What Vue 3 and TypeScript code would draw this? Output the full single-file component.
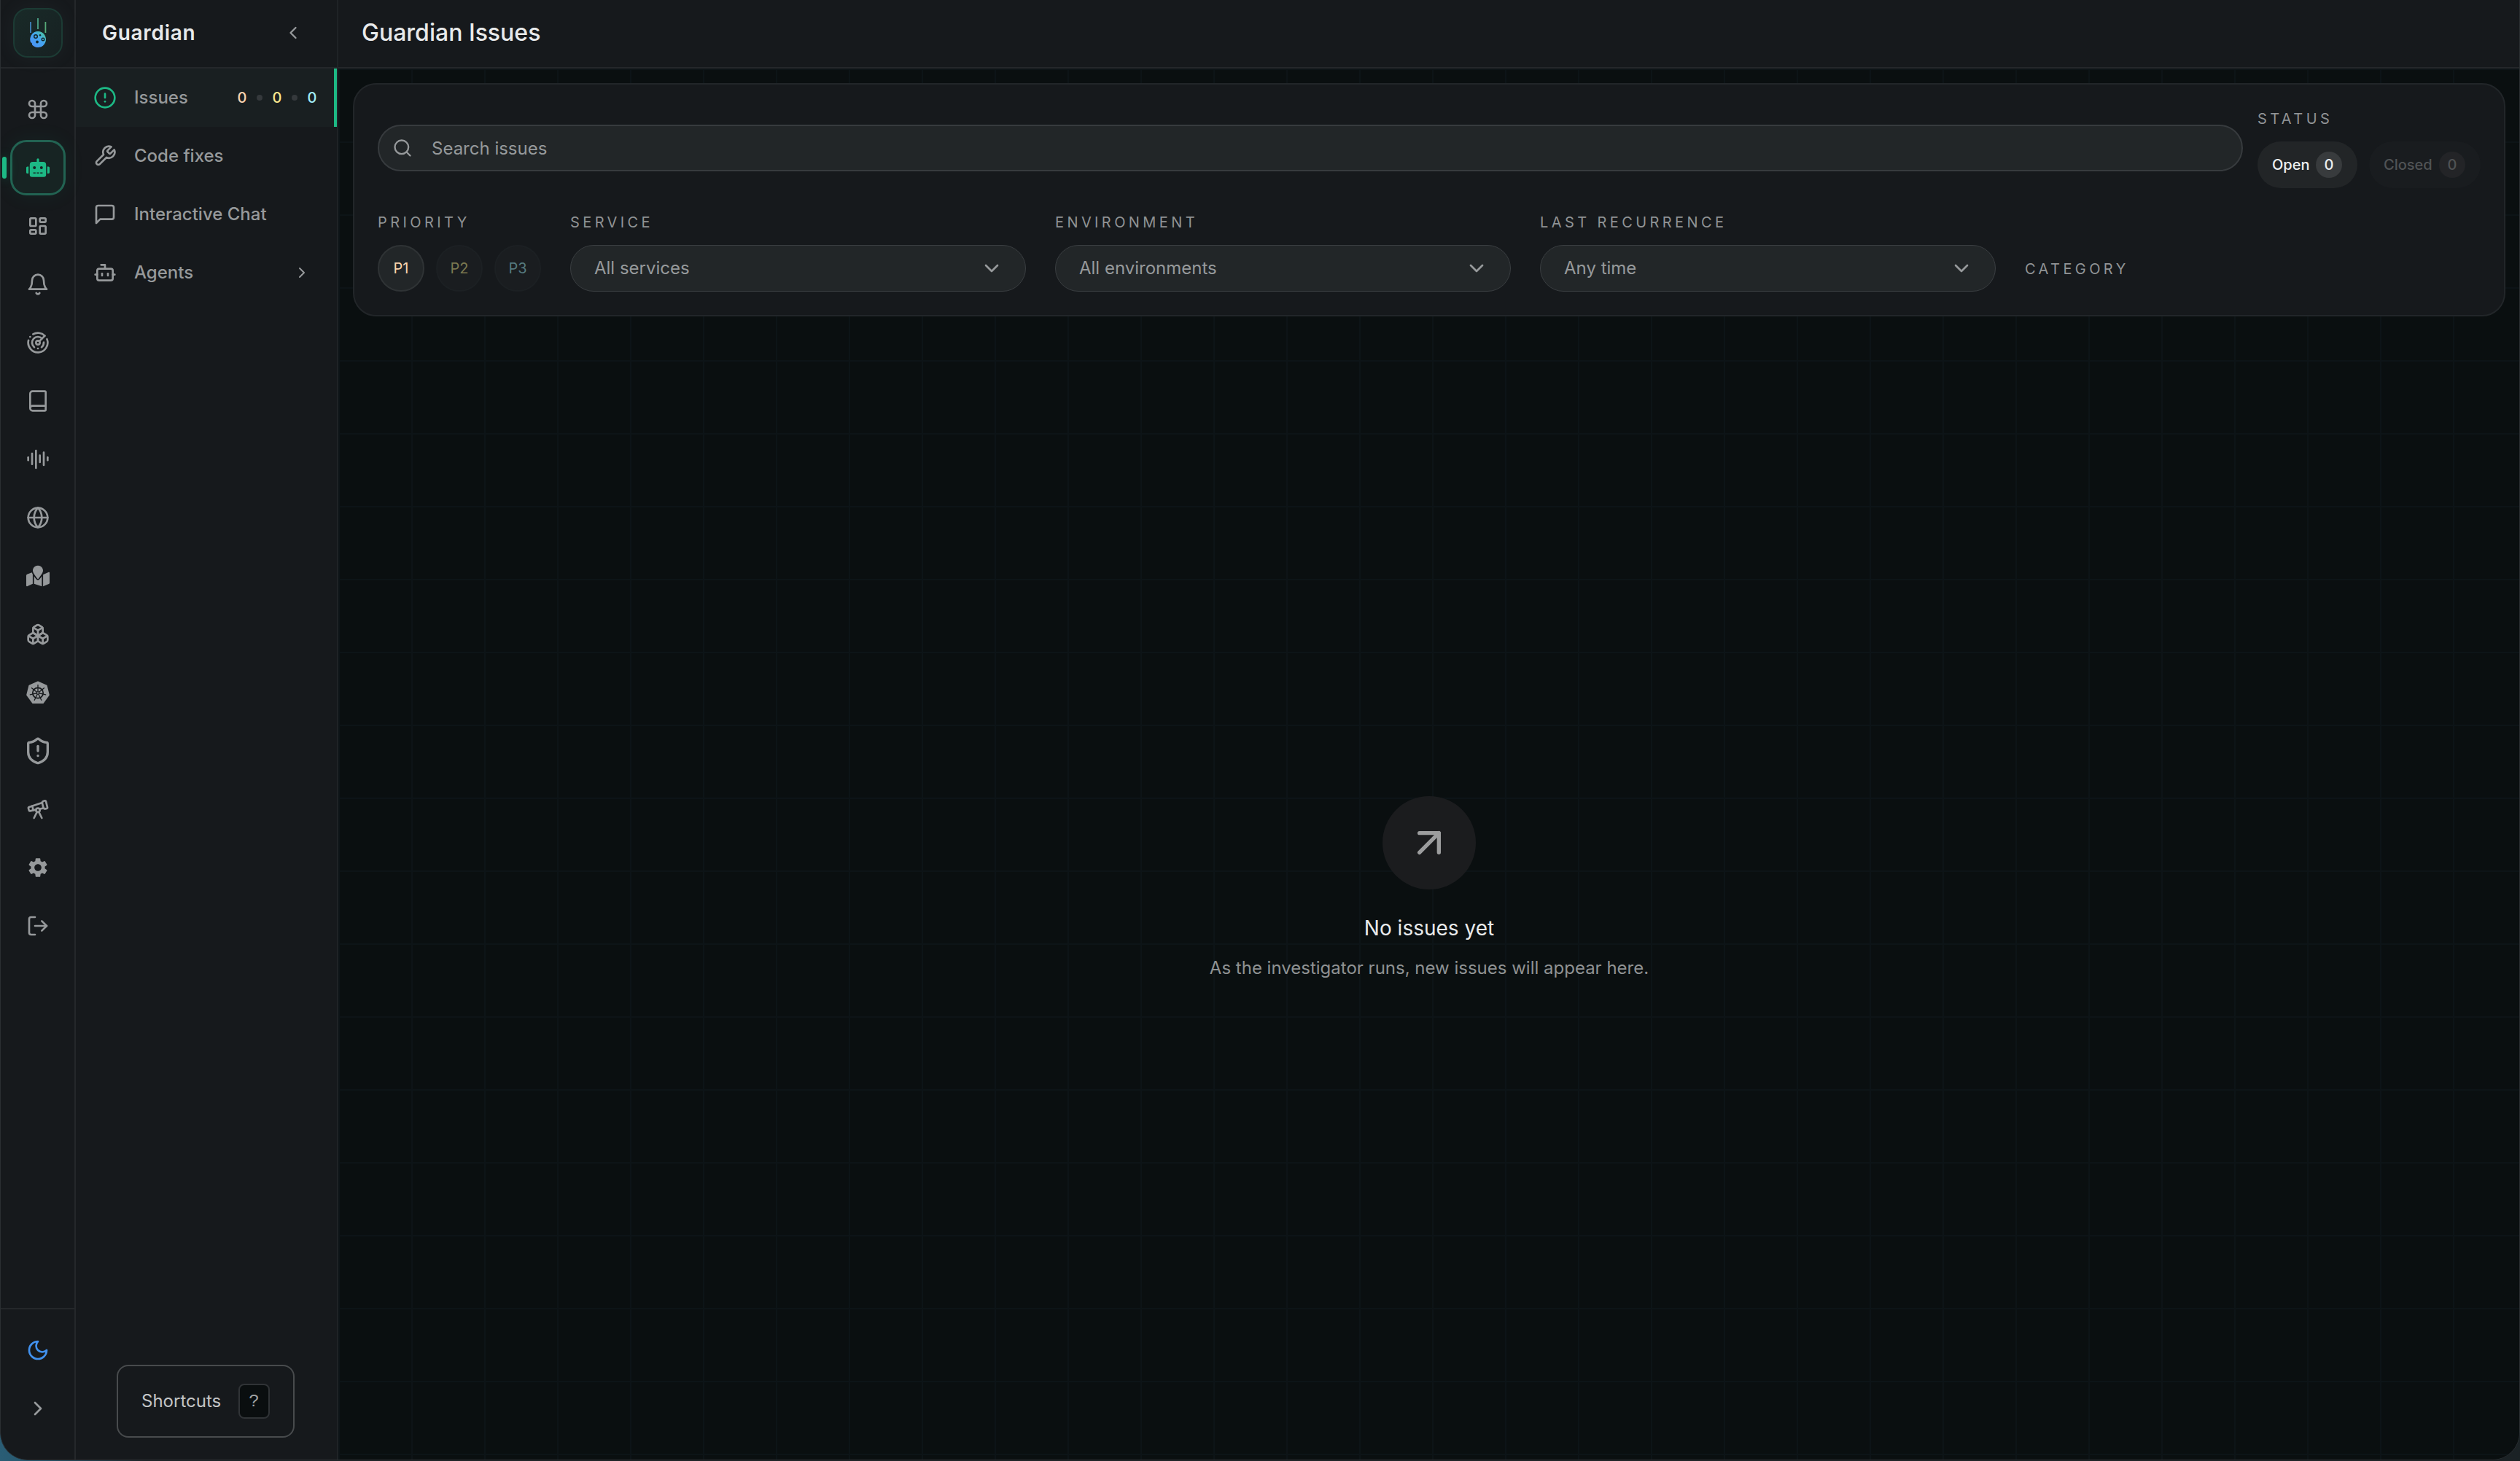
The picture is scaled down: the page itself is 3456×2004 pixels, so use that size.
<script setup lang="ts">
interface RailItem {
  name: string
  size: number
  box: string
  solid?: boolean
  active?: boolean
  paths: string[]
}

const railItems: RailItem[] = [
  { name: 'command', size: 32, box: '0 0 24 24', paths: ['M15 6v12a3 3 0 1 0 3-3H6a3 3 0 1 0 3 3V6a3 3 0 1 0-3 3h12a3 3 0 1 0-3-3'] },
  {
    name: 'guardian', size: 32, box: '0 0 640 512', solid: true, active: true,
    paths: ['M32,224H64V416H32A31.96,31.96,0,0,1,0,384V256A31.96,31.96,0,0,1,32,224Zm512-48V448a64.06,64.06,0,0,1-64,64H160a64.06,64.06,0,0,1-64-64V176a79.974,79.974,0,0,1,80-80H288V32a32,32,0,0,1,64,0V96H464A79.974,79.974,0,0,1,544,176ZM264,256a40,40,0,1,0-40,40A39.997,39.997,0,0,0,264,256Zm-8,128H192v32h64Zm96,0H288v32h64ZM456,256a40,40,0,1,0-40,40A39.997,39.997,0,0,0,456,256Zm-8,128H384v32h64ZM640,256V384a31.96,31.96,0,0,1-32,32H576V224h32A31.96,31.96,0,0,1,640,256Z'],
  },
  {
    name: 'dashboards', size: 32, box: '0 0 24 24',
    paths: [
      'M5 4h4a1 1 0 0 1 1 1v6a1 1 0 0 1-1 1H5a1 1 0 0 1-1-1V5a1 1 0 0 1 1-1',
      'M5 16h4a1 1 0 0 1 1 1v2a1 1 0 0 1-1 1H5a1 1 0 0 1-1-1v-2a1 1 0 0 1 1-1',
      'M15 12h4a1 1 0 0 1 1 1v6a1 1 0 0 1-1 1h-4a1 1 0 0 1-1-1v-6a1 1 0 0 1 1-1',
      'M15 4h4a1 1 0 0 1 1 1v2a1 1 0 0 1-1 1h-4a1 1 0 0 1-1-1V5a1 1 0 0 1 1-1',
    ],
  },
  { name: 'alerts', size: 32, box: '0 0 24 24', paths: ['M6 8a6 6 0 0 1 12 0c0 7 3 9 3 9H3s3-2 3-9', 'M10.3 21a1.94 1.94 0 0 0 3.4 0'] },
  {
    name: 'radar', size: 32, box: '0 0 24 24',
    paths: [
      'M19.07 4.93A10 10 0 0 0 6.99 3.34', 'M4 6h.01', 'M2.29 9.62A10 10 0 1 0 21.31 8.35',
      'M16.24 7.76A6 6 0 1 0 8.23 16.67', 'M12 18h.01', 'M17.99 11.66A6 6 0 0 1 15.77 16.67',
      'M10 12a2 2 0 1 0 4 0a2 2 0 1 0-4 0', 'm13.41 10.59 5.66-5.66',
    ],
  },
  { name: 'logs', size: 32, box: '0 0 24 24', paths: ['M4 19.5v-15A2.5 2.5 0 0 1 6.5 2H19a1 1 0 0 1 1 1v18a1 1 0 0 1-1 1H6.5a1 1 0 0 1 0-5H20'] },
  { name: 'traces', size: 32, box: '0 0 24 24', paths: ['M2 10v3', 'M6 6v11', 'M10 3v18', 'M14 8v7', 'M18 5v13', 'M22 10v3'] },
  { name: 'web', size: 32, box: '0 0 24 24', paths: ['M2 12a10 10 0 1 0 20 0a10 10 0 1 0-20 0', 'M12 2a14.5 14.5 0 0 0 0 20 14.5 14.5 0 0 0 0-20', 'M2 12h20'] },
  {
    name: 'map', size: 32, box: '0 0 576 512', solid: true,
    paths: ['M288 0c-69.59 0-126 56.41-126 126 0 56.26 82.35 158.8 113.9 196.02 6.39 7.54 17.82 7.54 24.2 0C331.65 284.8 414 182.26 414 126 414 56.41 357.59 0 288 0zM20.12 215.95A32.006 32.006 0 0 0 0 245.66v250.32c0 11.32 11.43 19.06 21.94 14.86L160 448V214.92c-8.84-15.98-16.07-31.54-21.25-46.42L20.12 215.95zM288 359.67c-14.07 0-27.38-6.18-36.51-16.96-19.66-23.2-40.57-49.62-59.49-76.72v182l192 64V266c-18.92 27.09-39.82 53.52-59.49 76.72-9.13 10.77-22.44 16.95-36.51 16.95zm266.06-198.51L416 224v288l139.88-55.95A31.996 31.996 0 0 0 576 426.34V176.02c0-11.32-11.43-19.06-21.94-14.86z'],
  },
  {
    name: 'services', size: 32, box: '0 0 24 24',
    paths: [
      'M2.97 12.92A2 2 0 0 0 2 14.63v3.24a2 2 0 0 0 .97 1.71l3 1.8a2 2 0 0 0 2.06 0L12 19v-5.5l-5-3-4.03 2.42Z',
      'm7 16.5-4.74-2.85', 'm7 16.5 5-3', 'M7 16.5v5.17',
      'M12 13.5V19l3.97 2.38a2 2 0 0 0 2.06 0l3-1.8a2 2 0 0 0 .97-1.71v-3.24a2 2 0 0 0-.97-1.71L17 10.5l-5 3Z',
      'm17 16.5-5-3', 'm17 16.5 4.74-2.85', 'M17 16.5v5.17',
      'M7.97 4.42A2 2 0 0 0 7 6.13v4.37l5 3 5-3V6.13a2 2 0 0 0-.97-1.71l-3-1.8a2 2 0 0 0-2.06 0l-3 1.8Z',
      'M12 8 7.26 5.15', 'm12 8 4.74-2.85', 'M12 13.5V8',
    ],
  },
  { name: 'kubernetes', size: 32, box: '0 0 32 32', solid: true, paths: [] },
  {
    name: 'security', size: 40, box: '0 0 24 24',
    paths: ['M20 13c0 5-3.5 7.5-7.66 8.95a1 1 0 0 1-.67-.01C7.5 20.5 4 18 4 13V6a1 1 0 0 1 1-1c2 0 4.5-1.2 6.24-2.72a1.17 1.17 0 0 1 1.52 0C14.51 3.81 17 5 19 5a1 1 0 0 1 1 1z', 'M12 8v4', 'M12 16h.01'],
  },
  {
    name: 'explore', size: 32, box: '0 0 24 24',
    paths: [
      'm10.065 12.493-6.18 1.318a.934.934 0 0 1-1.108-.702l-.537-2.15a1.07 1.07 0 0 1 .691-1.265l13.504-4.44',
      'm13.56 11.747 4.332-.924', 'm16 21-3.105-6.21',
      'M16.485 5.94a2 2 0 0 1 1.455-2.425l1.09-.272a1 1 0 0 1 1.212.727l1.515 6.06a1 1 0 0 1-.727 1.213l-1.09.272a2 2 0 0 1-2.425-1.455z',
      'm6.158 8.633 1.114 4.456', 'm8 21 3.105-6.21', 'M10 13a2 2 0 1 0 4 0a2 2 0 1 0-4 0',
    ],
  },
  {
    name: 'settings', size: 32, box: '0 0 24 24', solid: true,
    paths: ['M19.14 12.94c.04-.3.06-.61.06-.94 0-.32-.02-.64-.07-.94l2.03-1.58a.49.49 0 00.12-.61l-1.92-3.32a.488.488 0 00-.59-.22l-2.39.96c-.5-.38-1.03-.7-1.62-.94l-.36-2.54a.484.484 0 00-.48-.41h-3.84c-.24 0-.43.17-.47.41l-.36 2.54c-.59.24-1.13.57-1.62.94l-2.39-.96c-.22-.08-.47 0-.59.22L2.74 8.87c-.12.21-.08.47.12.61l2.03 1.58c-.05.3-.09.63-.09.94s.02.64.07.94l-2.03 1.58a.49.49 0 00-.12.61l1.92 3.32c.12.22.37.29.59.22l2.39-.96c.5.38 1.03.7 1.62.94l.36 2.54c.05.24.24.41.48.41h3.84c.24 0 .44-.17.47-.41l.36-2.54c.59-.24 1.13-.56 1.62-.94l2.39.96c.22.08.47 0 .59-.22l1.92-3.32c.12-.22.07-.47-.12-.61l-2.01-1.58zM12 15.6c-1.98 0-3.6-1.62-3.6-3.6s1.62-3.6 3.6-3.6 3.6 1.62 3.6 3.6-1.62 3.6-3.6 3.6z'],
  },
  { name: 'sign-out', size: 32, box: '0 0 24 24', paths: ['M9 21H5a2 2 0 0 1-2-2V5a2 2 0 0 1 2-2h4', 'm16 17 5-5-5-5', 'M21 12H9'] },
]

interface MenuItem {
  label: string
  active?: boolean
  expandable?: boolean
  paths: string[]
}

const menuItems: MenuItem[] = [
  { label: 'Issues', active: true, paths: ['M2 12a10 10 0 1 0 20 0a10 10 0 1 0-20 0', 'M12 8v4', 'M12 16h.01'] },
  { label: 'Code fixes', paths: ['M14.7 6.3a1 1 0 0 0 0 1.4l1.6 1.6a1 1 0 0 0 1.4 0l3.77-3.77a6 6 0 0 1-7.94 7.94l-6.91 6.91a2.12 2.12 0 0 1-3-3l6.91-6.91a6 6 0 0 1 7.94-7.94l-3.76 3.76z'] },
  { label: 'Interactive Chat', paths: ['M21 15a2 2 0 0 1-2 2H7l-4 4V5a2 2 0 0 1 2-2h14a2 2 0 0 1 2 2z'] },
  { label: 'Agents', expandable: true, paths: ['M12 8V4H8', 'M6 8h12a2 2 0 0 1 2 2v8a2 2 0 0 1-2 2H6a2 2 0 0 1-2-2v-8a2 2 0 0 1 2-2', 'M2 14h2', 'M20 14h2', 'M15 13v2', 'M9 13v2'] },
]

const spokes = Array.from({ length: 7 }, (_, i) => (i * 360) / 7)

const selects = [
  { label: 'Service', value: 'All services' },
  { label: 'Environment', value: 'All environments' },
  { label: 'Last recurrence', value: 'Any time' },
]
</script>

<template>
  <div class="desktop">
    <div class="window">
      <aside class="rail">
        <div class="rail-head">
          <div class="logo">
            <svg width="24" height="42" viewBox="0 0 24 42">
              <defs>
                <linearGradient id="moon" x1="0" y1="1" x2="1" y2="0">
                  <stop offset="0" stop-color="#4c8df6" />
                  <stop offset="0.55" stop-color="#45a5f0" />
                  <stop offset="1" stop-color="#4ccb86" />
                </linearGradient>
              </defs>
              <path d="M2 6v15" stroke="#3f83bd" stroke-width="1.8" />
              <path d="M12 1v15" stroke="#4da58a" stroke-width="1.8" />
              <path d="M22.400 6v15" stroke="#56aa78" stroke-width="1.8" />
              <path d="M12 19a11 11 0 1 1-8 18.500a3 3 0 0 0-2-3.500A11 11 0 0 1 12 19z" fill="url(#moon)" />
              <circle cx="9" cy="26" r="2.300" fill="none" stroke="#12262b" stroke-width="1.5" />
              <circle cx="19" cy="30" r="1.800" fill="none" stroke="#12262b" stroke-width="1.4" />
              <circle cx="11" cy="33.500" r="1.900" fill="#12262b" />
              <circle cx="15" cy="24.300" r="1.200" fill="#12262b" />
            </svg>
          </div>
        </div>
        <nav class="rail-nav">
          <div v-for="item in railItems" :key="item.name" class="rail-slot">
            <span v-if="item.active" class="rail-marker"></span>
            <div class="rail-button" :class="{ 'rail-active': item.active }">
              <svg v-if="item.name === 'kubernetes'" width="32" height="32" viewBox="0 0 32 32">
                <path d="M16 1.200 27.800 6.400 31 19.200 23 30.200H9L1 19.200 4.200 6.400Z" fill="currentColor" stroke="currentColor" stroke-width="1.6" stroke-linejoin="round" />
                <g class="wheel">
                  <circle cx="16" cy="16.500" r="7.200" stroke-width="1.700" />
                  <circle cx="16" cy="16.500" r="1.800" stroke-width="1.100" />
                  <path v-for="a in spokes" :key="a" d="M16 14.500V5.600" stroke-width="1.300" :transform="`rotate(${a} 16 16.5)`" />
                </g>
              </svg>
              <svg v-else :class="item.solid ? 'solid' : 'line'" :width="item.size" :height="item.size" :viewBox="item.box">
                <path v-for="d in item.paths" :key="d" :d="d" />
              </svg>
            </div>
          </div>
        </nav>
        <div class="rail-foot">
          <div class="rail-slot moon">
            <svg class="line" width="32" height="32" viewBox="0 0 24 24"><path d="M12 3a6 6 0 0 0 9 9 9 9 0 1 1-9-9Z" /></svg>
          </div>
          <div class="rail-slot">
            <svg class="line" width="32" height="32" viewBox="0 0 24 24"><path d="m9 18 6-6-6-6" /></svg>
          </div>
        </div>
      </aside>

      <aside class="panel">
        <header class="panel-head">
          <h2>Guardian</h2>
          <svg class="line" width="28" height="28" viewBox="0 0 24 24"><path d="m15 18-6-6 6-6" /></svg>
        </header>
        <nav class="menu">
          <div v-for="item in menuItems" :key="item.label" class="menu-item" :class="{ current: item.active }">
            <svg class="line menu-icon" width="32" height="32" viewBox="0 0 24 24">
              <path v-for="d in item.paths" :key="d" :d="d" />
            </svg>
            <span class="menu-label">{{ item.label }}</span>
            <span v-if="item.active" class="counts">
              <b class="c1">0</b><i></i><b class="c2">0</b><i></i><b class="c3">0</b>
            </span>
            <svg v-if="item.expandable" class="line expand" width="24" height="24" viewBox="0 0 24 24"><path d="m9 18 6-6-6-6" /></svg>
          </div>
        </nav>
        <div class="shortcuts">
          <span>Shortcuts</span>
          <kbd>?</kbd>
        </div>
      </aside>

      <main class="main">
        <header class="main-head"><h1>Guardian Issues</h1></header>
        <section class="canvas">
          <div class="filters">
            <div class="row top">
              <div class="search">
                <svg class="line" width="28" height="28" viewBox="0 0 24 24"><circle cx="11" cy="11" r="8" /><path d="m21 21-4.300-4.300" /></svg>
                <span>Search issues</span>
              </div>
              <div class="field">
                <div class="label">Status</div>
                <div class="status">
                  <div class="pill">Open <span>0</span></div>
                  <div class="pill closed">Closed <span>0</span></div>
                </div>
              </div>
            </div>
            <div class="row bottom">
              <div class="field">
                <div class="label">Priority</div>
                <div class="priorities">
                  <div class="prio p1">P1</div>
                  <div class="prio p2">P2</div>
                  <div class="prio p3">P3</div>
                </div>
              </div>
              <div v-for="s in selects" :key="s.label" class="field grow">
                <div class="label">{{ s.label }}</div>
                <div class="select">
                  <span>{{ s.value }}</span>
                  <svg class="line" width="32" height="32" viewBox="0 0 24 24"><path d="m6 9 6 6 6-6" /></svg>
                </div>
              </div>
              <div class="field grow"><div class="label">Category</div></div>
            </div>
          </div>
          <div class="empty">
            <div class="empty-icon">
              <svg class="line" width="64" height="64" viewBox="0 0 24 24"><path d="M7 7h10v10" /><path d="M7 17 17 7" /></svg>
            </div>
            <h3>No issues yet</h3>
            <p>As the investigator runs, new issues will appear here.</p>
          </div>
        </section>
      </main>
    </div>
  </div>
</template>

<style>
body {
  background: #1c2225;
}
</style>

<style scoped>
* {
  box-sizing: border-box;
}
h1, h2, h3, p {
  margin: 0;
}
svg {
  display: block;
  flex: none;
}
.desktop {
  width: 3456px;
  height: 2004px;
  overflow: hidden;
  background: linear-gradient(90deg, #2a5d75 0, #24566c 60px, #1b2225 200px);
  font-family: Inter, "Liberation Sans", sans-serif;
}
.window {
  display: flex;
  width: 3456px;
  height: 2003px;
  border: solid #2b2f32;
  border-width: 0 1px 1px;
  border-radius: 0 0 38px 38px;
  overflow: hidden;
  background: #16191c;
  color: #96999b;
}
.line {
  fill: none;
  stroke: currentColor;
  stroke-width: 2;
  stroke-linecap: round;
  stroke-linejoin: round;
}
.solid {
  fill: currentColor;
}

/* icon rail */
.rail {
  display: flex;
  flex-direction: column;
  width: 103px;
  border-right: 2px solid #24272a;
}
.rail-head {
  height: 94px;
  padding: 11px 0 0 17px;
  border-bottom: 2px solid #24272a;
}
.logo {
  display: flex;
  align-items: flex-start;
  justify-content: center;
  width: 68px;
  height: 68px;
  padding-top: 11px;
  border: 2px solid #1c3b34;
  border-radius: 20px;
  background: linear-gradient(135deg, #192a28, #172122);
  box-shadow: 0 0 28px rgba(120, 160, 150, 0.07);
}
.rail-nav {
  flex: 1;
  padding-top: 16px;
}
.rail-slot {
  position: relative;
  display: flex;
  align-items: center;
  justify-content: center;
  height: 80px;
  padding-left: 1px;
}
.rail-button {
  display: flex;
  align-items: center;
  justify-content: center;
  width: 76px;
  height: 76px;
  border-radius: 22px;
}
.rail-active {
  color: #1db985;
  border: 3px solid #226352;
  background: #172423;
  box-shadow: 0 0 30px rgba(29, 185, 133, 0.07);
}
.rail-marker {
  position: absolute;
  left: 2px;
  top: 25px;
  width: 6px;
  height: 30px;
  border-radius: 3px;
  background: #1db985;
  box-shadow: 0 0 16px rgba(29, 185, 133, 0.3);
}
.wheel {
  fill: none;
  stroke: #16191c;
  stroke-linecap: round;
}
.rail-foot {
  height: 208px;
  padding-top: 16px;
  border-top: 2px solid #24272a;
}
.moon {
  color: #4191ee;
}

/* section panel */
.panel {
  display: flex;
  flex-direction: column;
  width: 360px;
  border-right: 2px solid #1f2326;
}
.panel-head {
  display: flex;
  align-items: center;
  justify-content: space-between;
  height: 94px;
  padding: 0 46px 2px 36px;
  border-bottom: 2px solid #24272a;
}
.panel-head h2 {
  font-size: 28px;
  font-weight: 600;
  line-height: 40px;
  letter-spacing: 0.7px;
  color: #e8eaeb;
}
.menu {
  flex: 1;
}
.menu-item {
  display: flex;
  align-items: center;
  height: 80px;
  padding: 0 36px 0 24px;
}
.current {
  padding-right: 22px;
  border-right: 4px solid #1db985;
  background: #191f21;
}
.current .menu-icon {
  color: #1db985;
}
.menu-label {
  flex: 1;
  margin-left: 24px;
  padding-bottom: 2px;
  font-size: 24px;
  font-weight: 500;
}
.counts {
  display: flex;
  align-items: center;
  font-size: 20px;
}
.counts b {
  width: 16px;
  text-align: center;
  font-weight: 500;
}
.counts i {
  width: 8px;
  height: 8px;
  margin: 0 12px;
  border-radius: 4px;
  background: #35393c;
}
.c1 { color: #fad4b2; }
.c2 { color: #fbe88f; }
.c3 { color: #a2eefb; }
.shortcuts {
  display: flex;
  align-items: center;
  justify-content: space-between;
  width: 244px;
  height: 100px;
  margin: 0 0 30px 56px;
  padding: 0 32px;
  border: 2px solid #484b4d;
  border-radius: 16px;
  font-size: 24px;
  color: #c3c5c6;
}
.shortcuts span {
  padding-bottom: 2px;
}
.shortcuts kbd {
  display: flex;
  align-items: center;
  justify-content: center;
  width: 43px;
  height: 48px;
  border: 2px solid #303336;
  border-radius: 8px;
  background: #0a0e0f;
  font-family: "Liberation Mono", monospace;
  font-size: 24px;
  color: #a0a2a3;
}

/* main area */
.main {
  display: flex;
  flex-direction: column;
  flex: 1;
}
.main-head {
  height: 94px;
  padding: 25px 0 0 32px;
  border-bottom: 2px solid #24272a;
}
.main-head h1 {
  font-size: 32px;
  font-weight: 500;
  line-height: 40px;
  color: #e8eaeb;
}
.canvas {
  display: flex;
  flex-direction: column;
  flex: 1;
  padding: 20px 19px 0 20px;
  background-color: #0a0f10;
  background-image:
    linear-gradient(#0d1417 2px, transparent 2px),
    linear-gradient(90deg, #0d1417 2px, transparent 2px);
  background-size: 100px 100px;
}
.filters {
  height: 320px;
  padding: 32px;
  border: 2px solid #222629;
  border-radius: 32px;
  background: #16191c;
}
.row {
  display: flex;
}
.top {
  align-items: center;
  gap: 20px;
}
.bottom {
  align-items: flex-end;
  gap: 40px;
  margin-top: 32px;
}
.grow {
  flex: 1;
}
.label {
  height: 46px;
  font-size: 20px;
  line-height: 30px;
  letter-spacing: 4.4px;
  text-transform: uppercase;
  color: #909395;
}
.search {
  display: flex;
  align-items: center;
  flex: 1;
  height: 64px;
  padding-left: 18px;
  border: 2px solid #373b3e;
  border-radius: 32px;
  background: #222628;
  font-size: 24px;
}
.search span {
  margin-left: 26px;
}
.status, .priorities {
  display: flex;
  gap: 16px;
}
.pill {
  display: flex;
  align-items: center;
  justify-content: space-between;
  width: 137px;
  height: 64px;
  padding: 0 21px 0 20px;
  border-radius: 32px;
  background: #222527;
  font-size: 20px;
  font-weight: 500;
  color: #eef0f1;
}
.pill span {
  width: 36px;
  height: 36px;
  border-radius: 18px;
  background: #383b3d;
  text-align: center;
  line-height: 36px;
}
.closed {
  width: 153px;
  background: #191c1f;
  color: #505355;
}
.closed span {
  background: #232427;
}
.prio {
  width: 64px;
  height: 64px;
  border: 2px solid #2f3335;
  border-radius: 32px;
  background: #222628;
  font-size: 20px;
  line-height: 60px;
  text-align: center;
  color: #fad4ae;
}
.p2, .p3 {
  border-color: #1c2023;
  background: #1a1d20;
}
.p2 { color: #7b7850; }
.p3 { color: #55797f; }
.select {
  display: flex;
  align-items: center;
  justify-content: space-between;
  height: 64px;
  padding: 0 30px 0 32px;
  border: 1px solid #3a3e41;
  border-radius: 32px;
  background: #222628;
  font-size: 24px;
}
.select span {
  padding-bottom: 2px;
}
.empty {
  display: flex;
  flex-direction: column;
  align-items: center;
  margin-top: 658px;
}
.empty-icon {
  display: flex;
  align-items: center;
  justify-content: center;
  width: 128px;
  height: 128px;
  border-radius: 64px;
  background: #1b1c1e;
  color: #9c9d9e;
}
.empty h3 {
  margin-top: 32px;
  font-size: 28px;
  font-weight: 400;
  line-height: 42px;
  color: #e8eaeb;
}
.empty p {
  margin-top: 16px;
  font-size: 24px;
  line-height: 36px;
  color: #8f9293;
}
</style>
